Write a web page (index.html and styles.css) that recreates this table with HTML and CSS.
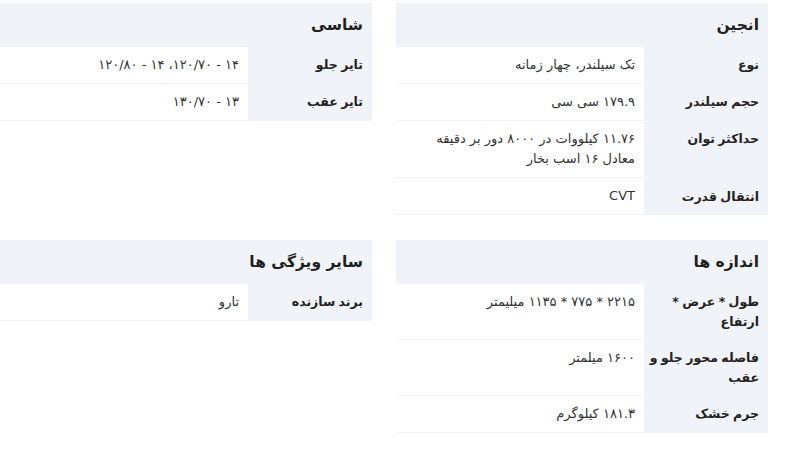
FILE: index.html
```html
<!DOCTYPE html>
<html lang="fa" dir="rtl">
<head>
<meta charset="utf-8">
<link rel="stylesheet" href="styles.css">
</head>
<body>
<main class="grid">
  <section class="card">
    <h2 class="card-title">انجین</h2>
    <div class="row"><div class="label">نوع</div><div class="value">تک سیلندر، چهار زمانه</div></div>
    <div class="row"><div class="label">حجم سیلندر</div><div class="value">۱۷۹.۹ سی سی</div></div>
    <div class="row"><div class="label">حداکثر توان</div><div class="value">۱۱.۷۶ کیلووات در ۸۰۰۰ دور بر دقیقه معادل ۱۶ اسب بخار</div></div>
    <div class="row"><div class="label mid">انتقال قدرت</div><div class="value">CVT</div></div>
  </section>
  <section class="card">
    <h2 class="card-title">شاسی</h2>
    <div class="row"><div class="label">تایر جلو</div><div class="value">۱۴ - ۱۲۰/۷۰، ۱۴ - ۱۲۰/۸۰</div></div>
    <div class="row"><div class="label">تایر عقب</div><div class="value">۱۳ - ۱۳۰/۷۰</div></div>
  </section>
  <section class="card">
    <h2 class="card-title">اندازه ها</h2>
    <div class="row"><div class="label">طول * عرض * ارتفاع</div><div class="value">۲۲۱۵ * ۷۷۵ * ۱۱۳۵ میلیمتر</div></div>
    <div class="row"><div class="label">فاصله محور جلو و عقب</div><div class="value">۱۶۰۰ میلمتر</div></div>
    <div class="row"><div class="label">جرم خشک</div><div class="value">۱۸۱.۳ کیلوگرم</div></div>
  </section>
  <section class="card">
    <h2 class="card-title">سایر ویژگی ها</h2>
    <div class="row"><div class="label">برند سازنده</div><div class="value">تارو</div></div>
  </section>
</main>
</body>
</html>
```

FILE: styles.css
```css
html, body {
  margin: 0;
  padding: 0;
  background: #ffffff;
}
body {
  font-family: "DejaVu Sans", "Noto Sans", sans-serif;
  color: #222;
  direction: rtl;
}
.grid {
  display: grid;
  grid-template-columns: 372px 372px;
  column-gap: 24px;
  row-gap: 25px;
  align-items: start;
  padding: 3px 17px 0 0;
  width: 768px;
}
.card {
  background: #f0f3f8;
}
.card-title {
  margin: 0;
  font-size: 15.5px;
  font-weight: bold;
  line-height: 20px;
  padding: 12px 9px;
  color: #1f1f1f;
}
.row {
  display: flex;
}
.label {
  width: 124px;
  box-sizing: border-box;
  flex: none;
  padding: 8px 9px 8px 3px;
  font-size: 12.5px;
  font-weight: bold;
  line-height: 20px;
  word-spacing: -1px;
  color: #222;
}
.value {
  flex: 1;
  background: #fff;
  padding: 8px 9px 8px 8px;
  font-size: 13px;
  line-height: 20px;
  color: #333;
  border-bottom: 1px solid #eef0f3;
}
.label.mid { padding-top: 9px; }
```
